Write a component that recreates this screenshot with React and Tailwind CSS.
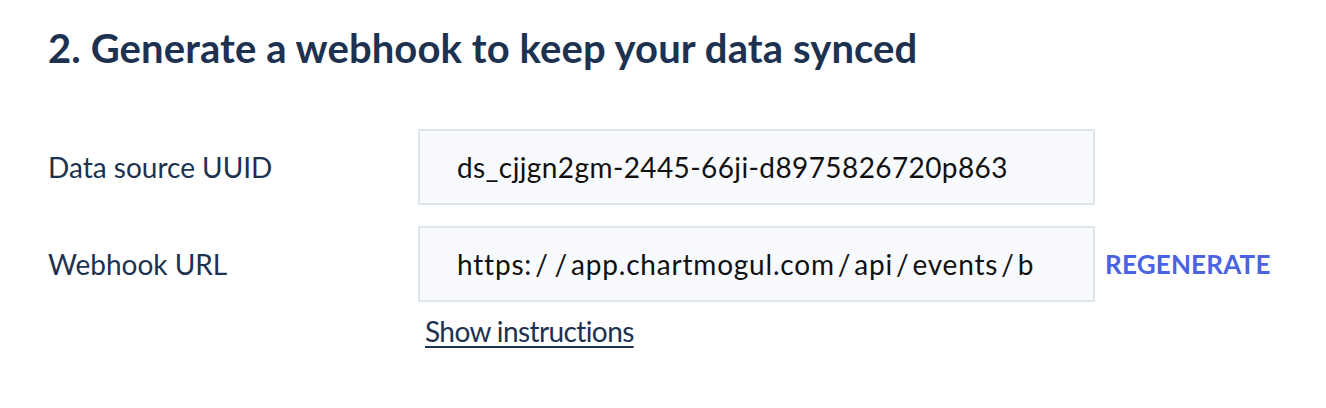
const Slash = () => <span className="mx-[3px]">/</span>;

export default function App() {
  return (
    <div className="w-[1326px] h-[408px] bg-white pl-12 pt-[22px] font-['Lato',sans-serif] text-[#1d3250]">
      {/* Heading */}
      <h2 className="text-[40px] leading-[52px] font-bold tracking-[0.1px]">
        2. Generate a webhook to keep your data synced
      </h2>

      {/* Fields */}
      <div className="mt-[55px] flex flex-col gap-[21px]">
        <div className="flex items-center">
          <label className="w-[370px] text-[28px] leading-none">Data source UUID</label>
          <div className="w-[677px] h-[76px] flex items-center border-2 border-[#dfe5ec] bg-[#f8fafd] pl-[37px] text-[28px] tracking-[0.4px] text-[#111] whitespace-nowrap overflow-hidden">
            ds_cjjgn2gm-2445-66ji-d8975826720p863
          </div>
        </div>

        <div className="flex items-center">
          <label className="w-[370px] text-[28px] leading-none">Webhook URL</label>
          <div className="w-[677px] h-[76px] flex items-center border-2 border-[#dfe5ec] bg-[#f8fafd] pl-[37px] text-[28px] tracking-[0.8px] text-[#111] whitespace-nowrap overflow-hidden">
            https:<Slash /><Slash />app.chartmogul.com<Slash />api<Slash />events<Slash />b
          </div>
          <button className="ml-[10px] text-[26px] font-bold text-[#4a63e3] tracking-[0.2px]">
            REGENERATE
          </button>
        </div>
      </div>

      <a href="#" className="inline-block ml-[377px] mt-[8px] text-[28px] tracking-[-0.6px] underline underline-offset-[4px] decoration-2">
        Show instructions
      </a>
    </div>
  );
}
